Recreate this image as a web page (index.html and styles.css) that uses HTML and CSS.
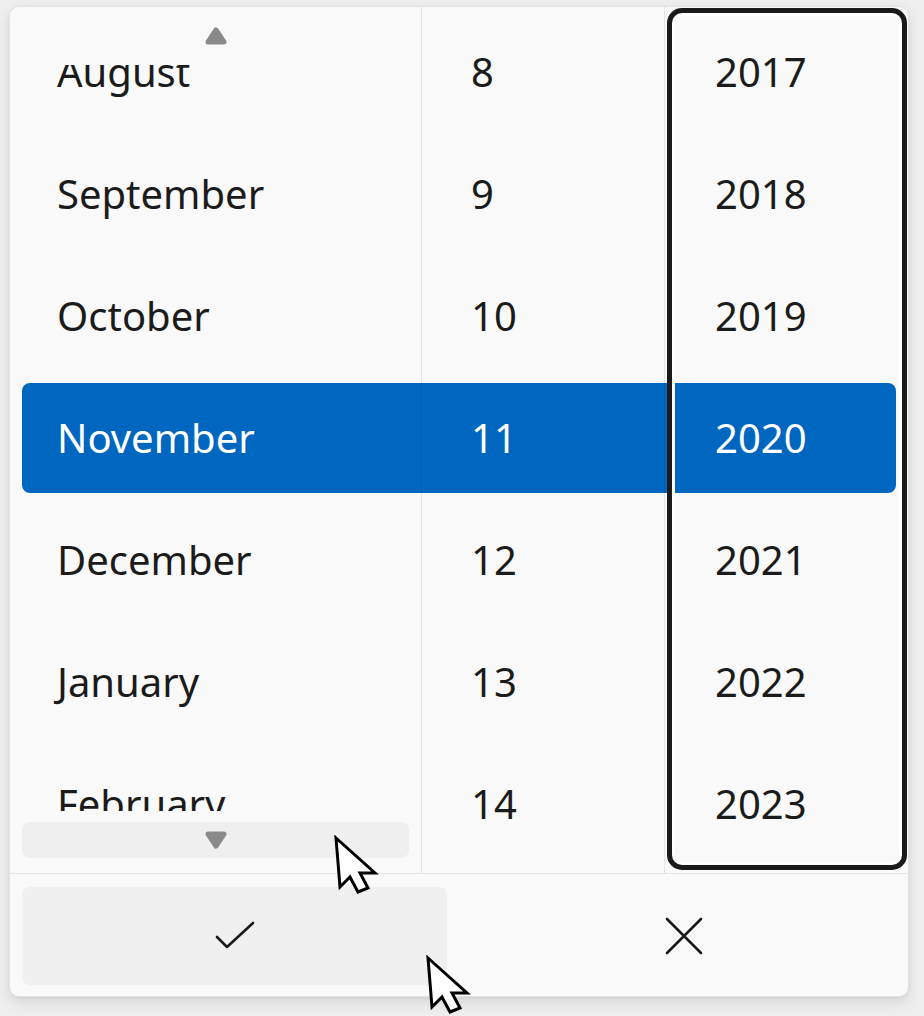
FILE: index.html
```html
<!DOCTYPE html>
<html lang="en">
<head>
<meta charset="utf-8">
<title>Date picker</title>
<link rel="stylesheet" href="styles.css">
</head>
<body>
<div class="flyout">
  <div class="picker">
    <div class="highlight"></div>
    <div class="col month">
      <ul class="list">
        <li>August</li>
        <li>September</li>
        <li>October</li>
        <li class="sel">November</li>
        <li>December</li>
        <li>January</li>
        <li>February</li>
      </ul>
      <div class="scroll up"><div class="pill"><svg width="26" height="20" viewBox="0 0 26 20"><polygon points="5,16 13,4 21,16" class="tri"/></svg></div></div>
      <div class="scroll down"><div class="pill hover"><svg width="26" height="20" viewBox="0 0 26 20"><polygon points="5,4 13,16 21,4" class="tri"/></svg></div></div>
    </div>
    <div class="col day">
      <ul class="list">
        <li>8</li>
        <li>9</li>
        <li>10</li>
        <li class="sel">11</li>
        <li>12</li>
        <li>13</li>
        <li>14</li>
      </ul>
    </div>
    <div class="col year">
      <ul class="list">
        <li>2017</li>
        <li>2018</li>
        <li>2019</li>
        <li class="sel">2020</li>
        <li>2021</li>
        <li>2022</li>
        <li>2023</li>
      </ul>
      <div class="focus"></div>
    </div>
  </div>
  <div class="footer">
    <button class="btn hover" aria-label="Accept"><svg width="40" height="30" viewBox="0 0 40 30"><polyline points="2,16 12,26 38,2" class="glyph"/></svg></button>
    <button class="btn" aria-label="Dismiss"><svg width="38" height="38" viewBox="0 0 38 38"><path d="M2 2 L36 36 M36 2 L2 36" class="glyph"/></svg></button>
  </div>
</div>
<svg class="cursor c1" width="46" height="62" viewBox="0 0 46 62"><polygon points="3,3 42,38 27,38 35,53 25,57 17,42 7,52" class="arrow"/></svg>
<svg class="cursor c2" width="46" height="62" viewBox="0 0 46 62"><polygon points="3,3 42,38 27,38 35,53 25,57 17,42 7,52" class="arrow"/></svg>
</body>
</html>
```
FILE: styles.css
```css
* { box-sizing: border-box; }
html, body { margin: 0; }
body {
  background: #efefef;
  padding: 6px 0 0 9px;
  height: 1016px;
  overflow: hidden;
  position: relative;
  font-family: "Noto Sans", "Open Sans", sans-serif;
  color: #1b1b1b;
}
.flyout {
  width: 900px;
  height: 991px;
  border: 1px solid #e3e3e3;
  border-radius: 10px;
  background: #f9f9f9;
  box-shadow: 0 6px 14px rgba(0,0,0,0.10), 0 1px 3px rgba(0,0,0,0.06);
  overflow: hidden;
  display: flex;
  flex-direction: column;
}
.picker {
  height: 867px;
  border-bottom: 1px solid #e6e6e6;
  display: flex;
  position: relative;
}
.highlight {
  position: absolute;
  left: 12px;
  top: 376px;
  width: 874px;
  height: 110px;
  background: #0067c0;
  border-radius: 8px;
  z-index: 0;
}
.col {
  position: relative;
  z-index: 1;
  border-right: 1px solid rgba(0,0,0,0.08);
  overflow: hidden;
}
.month { width: 412px; }
.day { width: 243px; }
.year { flex: 1; border-right: none; overflow: visible; }
.list {
  list-style: none;
  margin: 0;
  padding: 4px 0 0 0;
}
.list li {
  height: 122px;
  line-height: 122px;
  font-size: 40px;
  white-space: nowrap;
}
.month li { padding-left: 47px; }
.day li { padding-left: 49px; }
.year li { padding-left: 50px; }
.list li.sel { color: #ffffff; }
.scroll {
  position: absolute;
  left: 0;
  right: 0;
  background: #f9f9f9;
  padding: 11px 12px 0;
}
.scroll.up { top: 0; height: 58px; }
.scroll.down { bottom: 0; height: 62px; }
.pill {
  height: 36px;
  border-radius: 8px;
  display: flex;
  align-items: center;
  justify-content: center;
}
.pill.hover { background: #efefef; }
.pill svg { display: block; }
.tri { fill: #8a8a8a; stroke: #8a8a8a; stroke-width: 5; stroke-linejoin: round; }
.focus {
  position: absolute;
  left: 2px;
  top: 1px;
  right: 1px;
  bottom: 3px;
  border: 5px solid #1a1a1a;
  border-radius: 15px;
  box-shadow: inset 0 0 0 3px #ffffff;
  pointer-events: none;
}
.footer {
  flex: 1;
  display: flex;
  gap: 24px;
  padding: 13px 12px 11px;
}
.btn {
  flex: 1;
  border: none;
  background: transparent;
  border-radius: 8px;
  display: flex;
  align-items: center;
  justify-content: center;
  padding: 0;
}
.btn.hover { background: #f0f0f0; }
.btn svg { display: block; }
.glyph { fill: none; stroke: #1a1a1a; stroke-width: 2.6; stroke-linecap: round; stroke-linejoin: round; }
.cursor { position: absolute; display: block; z-index: 10; }
.c1 { left: 333px; top: 835px; }
.c2 { left: 425px; top: 955px; }
.arrow { fill: #ffffff; stroke: #000000; stroke-width: 3; stroke-linejoin: miter; }
```
